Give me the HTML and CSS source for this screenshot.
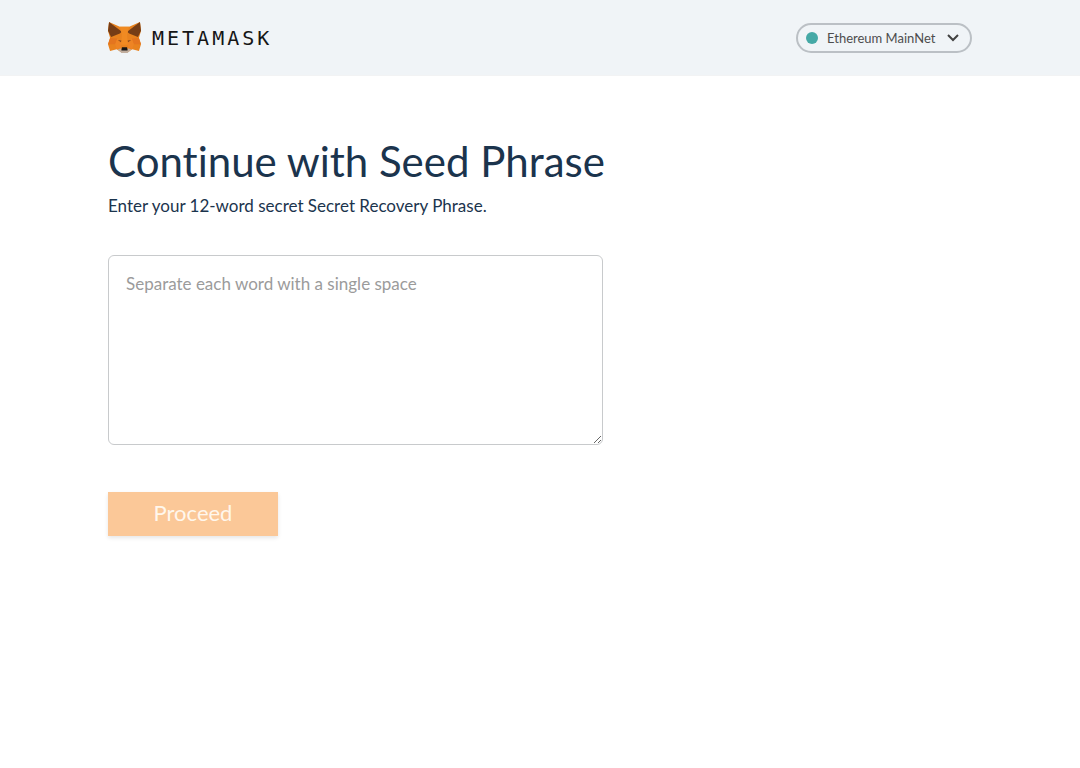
FILE: index.html
```
<!DOCTYPE html>
<html lang="en">
<head>
	<meta charset="utf-8">
	<title>Seed phrase mockup</title>
	<link rel="stylesheet" href="styles.css">
</head>
<body>
	<header class="header">
		<div class="logo">
			<svg class="fox" viewBox="0 0 64 60" aria-hidden="true">
				<path fill="#e8821e" d="M2 0 L23 9 H41 L62 0 L64 17 L60 31 L64 43 L60 56 L47 53 L38 59 H26 L17 53 L4 56 L0 43 L4 31 L0 17 Z"/>
				<path fill="#763d16" d="M2 0 L27 19 L23 22 L6 29 L0 17 Z M62 0 L37 19 L41 22 L58 29 L64 17 Z"/>
				<path fill="#f08a22" d="M23 9 H41 L37 25 L39 44 H25 L27 25 Z"/>
				<path fill="#e4751f" d="M4 31 L18 32 L14 43 H0 Z M60 31 L46 32 L50 43 H64 Z"/>
				<path fill="#ee8424" d="M14 43 L18 32 L26 40 L25 50 L17 53 Z M50 43 L46 32 L38 40 L39 50 L47 53 Z"/>
				<path fill="#8a4a1c" d="M19 35 L26 36 L25 39 Z M45 35 L38 36 L39 39 Z"/>
				<path fill="#c0ad9e" d="M19 53 L26 51 V54 H38 V51 L45 53 L38 60 H26 Z"/>
				<path fill="#161616" d="M27 49 H37 L38 55 H26 Z"/>
			</svg>
			<span class="wordmark">METAMASK</span>
		</div>
		<label class="network">
			<span class="dot"></span>
			<select class="network-select" aria-label="Network">
				<option>Ethereum MainNet</option>
			</select>
			<svg class="chevron" viewBox="0 0 12 8" aria-hidden="true">
				<path d="M1 1 L6 6 L11 1"/>
			</svg>
		</label>
	</header>
	<main class="content">
		<h1 class="title">Continue with Seed Phrase</h1>
		<label class="intro" for="phrase">Enter your 12-word secret Secret Recovery Phrase.</label>
		<textarea id="phrase" class="phrase" placeholder="Separate each word with a single space"></textarea>
		<button type="button" class="proceed" disabled>Proceed</button>
	</main>
</body>
</html>
```
FILE: styles.css
```
*				{ box-sizing: border-box; }
body			{ margin: 0; background: #fff; color: #1b344d;
				  font: 16px/24px Lato, "Liberation Sans", sans-serif;
				  font-variant-ligatures: none; }

.header			{ display: flex; align-items: center; justify-content: space-between;
				  height: 76px; padding: 0 10%; background: #f0f4f7;
				  border-bottom: 1px solid #f2f3f4; }
.logo			{ display: flex; align-items: center; gap: 11px; }
.fox			{ display: block; width: 33px; height: 31px; }
.wordmark		{ font: 20px/24px "DejaVu Sans Mono", monospace;
				  letter-spacing: 3px; color: #161616; }

.network		{ display: flex; align-items: center; height: 30px; padding: 0 11px 0 8px;
				  border: 2px solid #bbc0c5; border-radius: 15px; }
.dot			{ width: 12px; height: 12px; margin-right: 9px; border-radius: 50%;
				  background: #45a9a6; }
.network-select	{ appearance: none; margin: 0 11px 0 0; padding: 0; border: 0;
				  background: none; color: #4d4d4d;
				  font: 13px/20px Lato, sans-serif; }
.chevron		{ width: 12px; height: 8px; fill: none; stroke: #424242; stroke-width: 2; }

.content		{ display: flex; flex-direction: column; align-items: flex-start;
				  padding: 60px 10%; }
.title			{ margin: 0 0 8px; font-size: 42px; line-height: 50px; font-weight: 400; }
.intro			{ margin-bottom: 37px; font-size: 17px; }
.phrase			{ width: 495px; max-width: 100%; height: 190px; margin-bottom: 47px;
				  padding: 16px 17px; border: 1px solid #c8cacc; border-radius: 6px;
				  background: #fff; color: #1b344d; resize: both;
				  font: 17px/24px Lato, sans-serif; }
.phrase::placeholder { color: #9b9b9b; }
.proceed		{ width: 170px; height: 44px; padding: 0 0 2px; border: 0;
				  background: #fbc898; color: #fff7ec;
				  font: 22px/24px Lato, sans-serif;
				  box-shadow: 0 2px 4px rgba(0, 0, 0, 0.1); }
```
